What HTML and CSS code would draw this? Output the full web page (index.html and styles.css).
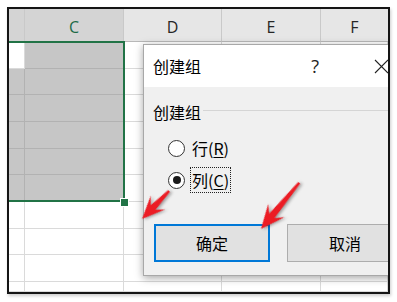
FILE: index.html
```html
<!DOCTYPE html>
<html lang="zh-CN">
<head>
    <meta charset="UTF-8">
    <meta name="viewport" content="width=device-width, initial-scale=1.0">
    <title>创建组</title>
    <link rel="stylesheet" href="styles.css">
</head>
<body>
    <div class="page">
        <div class="sheet">
            <div class="grid">
                <div class="hd hd-sel"></div>
                <div class="hd hd-sel hd-active">C</div>
                <div class="hd">D</div>
                <div class="hd">E</div>
                <div class="hd hd-last">F</div>

                <div class="cell"></div><div class="cell s"></div><div class="cell"></div><div class="cell"></div><div class="cell"></div>
                <div class="cell s"></div><div class="cell s"></div><div class="cell"></div><div class="cell"></div><div class="cell"></div>
                <div class="cell s"></div><div class="cell s"></div><div class="cell"></div><div class="cell"></div><div class="cell"></div>
                <div class="cell s"></div><div class="cell s"></div><div class="cell"></div><div class="cell"></div><div class="cell"></div>
                <div class="cell s"></div><div class="cell s"></div><div class="cell"></div><div class="cell"></div><div class="cell"></div>
                <div class="cell s"></div><div class="cell s"></div><div class="cell"></div><div class="cell"></div><div class="cell"></div>
                <div class="cell"></div><div class="cell"></div><div class="cell"></div><div class="cell"></div><div class="cell"></div>
                <div class="cell"></div><div class="cell"></div><div class="cell"></div><div class="cell"></div><div class="cell"></div>
                <div class="cell"></div><div class="cell"></div><div class="cell"></div><div class="cell"></div><div class="cell"></div>
                <div class="cell"></div><div class="cell"></div><div class="cell"></div><div class="cell"></div><div class="cell"></div>
            </div>

            <!-- selected range B2:C7 -->
            <div class="selection"></div>
            <div class="fill-handle"></div>

            <div class="dialog">
                <div class="dialog-title">
                    <span class="title-text">创建组</span>
                    <span class="help">?</span>
                    <svg class="close" width="15" height="15" viewBox="0 0 15 15">
                        <path d="M1 1 L14 14 M14 1 L1 14" stroke="#222" stroke-width="1.1" fill="none"/>
                    </svg>
                </div>
                <div class="dialog-body">
                    <div class="group-label">
                        <span>创建组</span>
                        <span class="group-line"></span>
                    </div>
                    <div class="radio-row first">
                        <span class="radio"></span>
                        <span class="radio-text">行(<u>R</u>)</span>
                    </div>
                    <div class="radio-row second">
                        <span class="radio checked"></span>
                        <span class="radio-text focus">列(<u>C</u>)</span>
                    </div>
                    <div class="buttons">
                        <div class="btn btn-default">确定</div>
                        <div class="btn">取消</div>
                    </div>
                </div>
            </div>
        </div>

        <svg class="arrows" width="397" height="302" viewBox="0 0 397 302">
            <polygon class="arrow" transform="translate(142 219) rotate(-46)"
                points="0,0 23,-10 16,-3.2 39,-1.2 39,1.2 16,3.2 23,10"/>
            <polygon class="arrow" transform="translate(261 229) rotate(-50.4)"
                points="0,0 24,-10.5 17,-3.4 60,-1.3 60,1.3 17,3.4 24,10.5"/>
        </svg>
    </div>
</body>
</html>
```

FILE: styles.css
```css
body {
    margin: 0;
    padding: 0;
    background-color: #fff;
    font-family: "Noto Sans", "Noto Sans CJK SC", sans-serif;
    color: #000;
}

.page {
    position: relative;
    width: 397px;
    height: 302px;
    padding: 7px 7px 8px 7px;
    box-sizing: border-box;
    background-color: #fff;
}

.sheet {
    position: relative;
    width: 100%;
    height: 100%;
    border: 2px solid #151515;
    box-sizing: border-box;
    overflow: hidden;
    background-color: #fff;
    box-shadow: 1px 2px 3px rgba(0, 0, 0, 0.2);
}

.grid {
    display: grid;
    grid-template-columns: 16px 99px 98px 99px 1fr;
    grid-template-rows: 33px repeat(9, 26.67px) 1fr;
    height: 100%;
}

.hd {
    display: flex;
    align-items: flex-end;
    justify-content: center;
    padding-bottom: 4px;
    box-sizing: border-box;
    background-color: #e6e6e6;
    border-right: 1px solid #c9c9c9;
    border-bottom: 1px solid #b8b8b8;
    font-family: "Open Sans", "Noto Sans", sans-serif;
    font-size: 16px;
    line-height: 20px;
    color: #262626;
}

.hd-sel {
    background-color: #d4d4d4;
}

.hd-active {
    color: #1d6b48;
}

.hd-last {
    border-right: none;
}

.cell {
    box-sizing: border-box;
    border-right: 1px solid #dadada;
    border-bottom: 1px solid #dadada;
}

.cell.s {
    background-color: #c6c6c6;
    border-color: #b2b2b2;
}

.selection {
    position: absolute;
    left: -4px;
    top: 32px;
    width: 120px;
    height: 161px;
    border: 2px solid #217346;
    box-sizing: border-box;
}

.fill-handle {
    position: absolute;
    left: 111px;
    top: 189px;
    width: 7px;
    height: 7px;
    background-color: #217346;
    border: 1px solid #fff;
}

.dialog {
    position: absolute;
    left: 134px;
    top: 35px;
    width: 271px;
    height: 232px;
    display: flex;
    flex-direction: column;
    border: 1px solid #a8a8a8;
    box-sizing: border-box;
    background-color: #f0f0f0;
    box-shadow: 0 2px 8px rgba(0, 0, 0, 0.35);
    font-family: "Noto Sans CJK SC", sans-serif;
    font-size: 16px;
}

.dialog-title {
    display: flex;
    align-items: center;
    height: 42px;
    padding-left: 9px;
    background-color: #fff;
}

.title-text {
    flex: 1;
}

.help {
    font-family: "Open Sans", "Noto Sans", sans-serif;
    font-size: 18px;
    color: #222;
}

.close {
    margin-left: 55px;
    margin-right: 24px;
}

.dialog-body {
    flex: 1;
    padding-left: 9px;
}

.group-label {
    display: flex;
    align-items: center;
    margin-top: 15px;
    line-height: 20px;
}

.group-line {
    flex: 1;
    height: 1px;
    margin-left: 2px;
    margin-top: -4px;
    background-color: #d5d5d5;
}

.radio-row {
    display: flex;
    align-items: center;
    height: 26px;
    margin-left: 15px;
}

.radio-row.first {
    margin-top: 13px;
}

.radio-row.second {
    margin-top: 6px;
}

.radio {
    display: flex;
    align-items: center;
    justify-content: center;
    width: 17px;
    height: 17px;
    margin-right: 5px;
    border: 1px solid #333;
    border-radius: 50%;
    box-sizing: border-box;
    background-color: #fff;
}

.radio.checked::after {
    content: "";
    width: 8px;
    height: 8px;
    border-radius: 50%;
    background-color: #1a1a1a;
}

.radio-text {
    padding: 0 1px;
    line-height: 24px;
    border: 1px dotted transparent;
}

.radio-text.focus {
    border-color: #222;
}

.radio-text u {
    text-underline-offset: 2px;
}

.buttons {
    display: flex;
    gap: 17px;
    margin-top: 31px;
    margin-left: 1px;
}

.btn {
    display: flex;
    align-items: center;
    justify-content: center;
    flex: none;
    width: 116px;
    height: 38px;
    box-sizing: border-box;
    border: 1px solid #adadad;
    background-color: #e1e1e1;
}

.btn-default {
    border: 2px solid #0078d7;
}

.arrows {
    position: absolute;
    left: 0;
    top: 0;
}

.arrow {
    fill: #ec1c24;
    filter: drop-shadow(1px 2px 1.5px rgba(0, 0, 0, 0.35));
}
```
